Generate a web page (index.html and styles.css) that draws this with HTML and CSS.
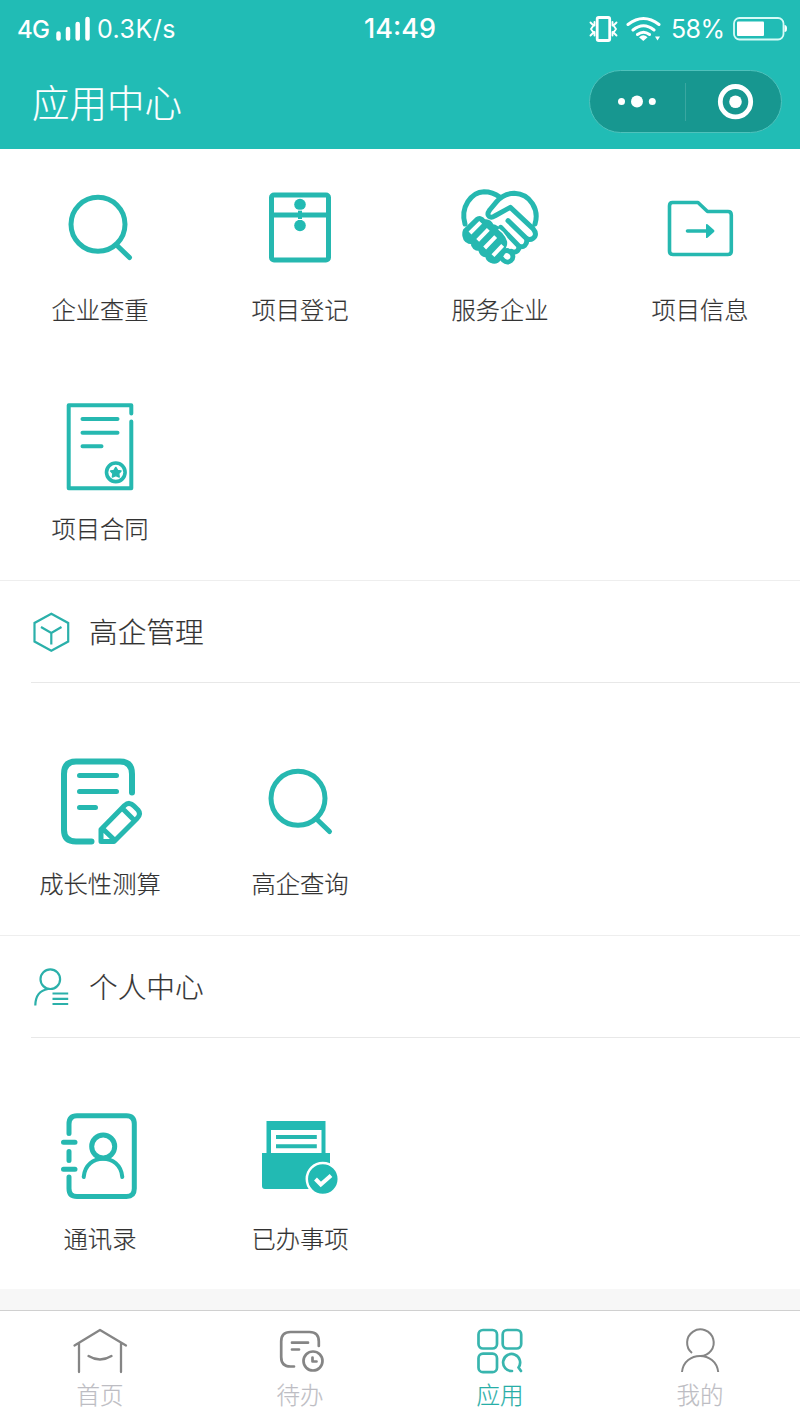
FILE: index.html
```html
<!DOCTYPE html>
<html lang="zh-CN">
<head>
<meta charset="utf-8">
<title>应用中心</title>
<link rel="stylesheet" href="styles.css">
</head>
<body>
<header class="top">
  <div class="status">
    <div class="status-left">
      <span class="net">4G</span>
      <svg class="signal" width="35" height="26" viewBox="56 14 35 26"><path d="M58.500 31.500v5M68 27v9.500M77.700 22v14.500M87.500 17v19.500"/></svg>
      <span class="speed">0.3K/s</span>
    </div>
    <span class="clock">14:49</span>
    <div class="status-right">
      <svg class="vibrate" width="30" height="30" viewBox="588 12 30 30"><rect x="597.200" y="15.500" width="12.500" height="23" rx="1.500"/><path class="wave" d="M590.500 20.500l3 3-2.500 3.500 2.500 3.500-3 3M594.500 20l0 3.500M594.500 30v3.500M616.500 20.500l-3 3 2.500 3.500-2.500 3.500 3 3M612.500 20v3.500M612.500 30v3.500"/></svg>
      <svg class="wifi" width="36" height="30" viewBox="626 12 36 30"><path class="wifi-arc" d="M628 22.500Q643.500 10.500 659 22.500M633 28Q643.500 19.500 654 28M637.500 32.500Q643.500 28 649.500 32.500"/><path class="wifi-dot" d="M639 35.200q4.300-4 8.600 0l-4.300 3.800zM655 34.500h5l-2.500 4z"/></svg>
      <span class="percent">58%</span>
      <svg class="battery" width="56" height="26" viewBox="732 14 56 26"><rect class="battery-case" x="734" y="16" width="49.500" height="21.500" rx="5.500"/><rect class="battery-fill" x="737" y="19.500" width="27" height="14.500" rx="1"/><path class="battery-fill" d="M784.500 23q2.500 0 2.500 3.500t-2.500 3.500z"/></svg>
    </div>
  </div>
  <div class="title-bar">
    <h1 class="title">应用中心</h1>
    <div class="capsule">
      <svg width="95" height="61" viewBox="590 71 95 61"><circle cx="621.500" cy="101.500" r="3.500"/><circle cx="637" cy="101.500" r="6"/><circle cx="652.300" cy="101.500" r="3.500"/></svg>
      <span class="divider"></span>
      <svg width="95" height="61" viewBox="686 71 95 61"><circle class="ring" cx="735.500" cy="101.700" r="15.200"/><circle cx="735.500" cy="101.700" r="6.300"/></svg>
    </div>
  </div>
</header>
<main>
  <section class="apps apps-first">
    <a class="app">
      <svg class="icon" viewBox="50 178 100 100"><circle cx="98" cy="224.300" r="27"/><path d="M116.500 245L129.500 257.500"/></svg>
      <span>企业查重</span>
    </a>
    <a class="app">
      <svg class="icon" viewBox="250 178 100 100"><rect x="271.500" y="195" width="57" height="65" rx="2.500"/><path d="M273 215h54"/><g class="solid"><circle cx="300" cy="204.500" r="5.800"/><circle cx="300" cy="225.500" r="5.800"/><path d="M298 210h4v11h-4z"/></g><path class="gap" d="M296.500 210.200h7M296.500 219.500h7"/></svg>
      <span>项目登记</span>
    </a>
    <a class="app">
      <svg class="icon" viewBox="450 178 100 100">
        <g class="hands" transform="translate(450 180) scale(.33333)">
          <path d="M45 132C30 82 64 36 102 35Q128 35 149 51"/>
          <path d="M255 132C268 90 242 42 193 40C169 40 152 51 140 65L119 90C106 109 122 116 134 108L181 82L249 146Q264 164 249 175Q240 181 230 176C233 195 220 204 207 199C207 214 196 220 184 214"/>
          <path d="M174 122L232 178M152 142L207 199"/>
          <path class="fist" d="M45 151L79 118Q91 108 103 124Q119 121 126 138Q143 140 148 157Q162 160 166 178Q168 192 161 205L150 234Q138 250 124 243Q111 239 112 225Q94 228 90 207Q70 208 67 187Q46 186 43 167Q42 158 45 151Z"/>
          <path class="slot" d="M92 127L60 159M115 148L83 181M137 170L104 204M158 196L129 227"/>
          <path class="crease" d="M147 148Q174 166 178 204"/>
          <path class="pinky" d="M160 216Q173 206 184 219Q194 231 183 242Q171 251 160 241L151 230Z"/>
        </g>
      </svg>
      <span>服务企业</span>
    </a>
    <a class="app">
      <svg class="icon" viewBox="650 178 100 100"><path class="mid" d="M672.500 202.500H698L707.500 211.500H728Q731.300 211.500 731.300 215V251Q731.300 254.500 728 254.500H673Q669.500 254.500 669.500 251V206Q669.500 202.500 672.500 202.500ZM687.500 231H707"/><path class="solid" d="M706 224.500Q706 223.500 707.500 224.200L714 230Q715 231 714 232L707.500 237.800Q706 238.500 706 237.500Z"/></svg>
      <span>项目信息</span>
    </a>
    <a class="app">
      <svg class="icon" viewBox="50 397 100 100"><path class="mid4" d="M131.300 413.500V405.300H68.700V488.300H131.300V421.500M82.500 419H117.500M82.500 432.800H117.500M82.500 446.300H101.500"/><circle class="mid" cx="115.800" cy="472.300" r="9.300"/><path class="star" d="M115.800 467.500L117.600 470.500L121 471L118.700 473.500L119.200 477L115.800 475.600L112.400 477L112.900 473.500L110.600 471L114 470.500Z"/></svg>
      <span>项目合同</span>
    </a>
  </section>

  <section class="group">
    <div class="group-head">
      <svg class="head-icon" width="40" height="44" viewBox="31 610 40 44"><path d="M51.300 613.700L68.200 623V641.500L51.300 650.800L34.500 641.500V623ZM41 627L51.300 633L61.500 627M51.300 633V644.500"/></svg>
      <h2>高企管理</h2>
    </div>
    <div class="apps">
      <a class="app">
        <svg class="icon" viewBox="50 752 100 100"><path class="bold" d="M132 792.500V774Q132 761.500 120 761.500H76Q64 761.500 64 774V830Q64 841.500 76 841.500H91.500"/><path d="M79.500 775.500H116.500M79.500 791.500H116.500M79.500 807.500H95.500"/><path d="M101 829.500L124.500 805.500Q129.500 801 134 806L138 810Q141.500 814 137 818.500L114 841.500H101ZM103 829L114.500 840M122.500 808.500L134 820"/></svg>
        <span>成长性测算</span>
      </a>
      <a class="app">
        <svg class="icon" viewBox="250 752 100 100"><circle cx="298" cy="798.300" r="27"/><path d="M316.500 819L329.500 831.500"/></svg>
        <span>高企查询</span>
      </a>
    </div>
  </section>

  <section class="group">
    <div class="group-head">
      <svg class="head-icon" width="40" height="44" viewBox="31 965 40 44"><circle cx="50.300" cy="979.200" r="9.800"/><path d="M35.300 1005.500Q35.500 991 48 989M52.500 993.500H68.200M52.500 998.800H68.200M52.500 1004H68.200"/></svg>
      <h2>个人中心</h2>
    </div>
    <div class="apps">
      <a class="app">
        <svg class="icon" viewBox="50 1107 100 100"><path d="M69 1133.500V1124Q69 1115.700 77 1115.700H126.500Q134.300 1115.700 134.300 1124V1188.500Q134.300 1196.500 126.500 1196.500H77Q69 1196.500 69 1188.500V1177M69 1151.500V1160.500M63.500 1142.200H75M63.500 1169.200H75"/><circle cx="103.200" cy="1146.500" r="11.500"/><path class="mid4" d="M83.700 1177C85.500 1152.500 120.500 1152.500 122.300 1177"/></svg>
        <span>通讯录</span>
      </a>
      <a class="app">
        <svg class="icon" viewBox="250 1107 100 100"><path class="solid" d="M266.500 1121H325.500V1153H330V1189H265Q262 1189 262 1186V1153H266.500Z"/><path class="paper" d="M271 1130H321.500V1153H271Z"/><path class="mid4 flat" d="M276 1137H316.800M276 1146.200H316.800"/><circle class="badge" cx="322.800" cy="1179" r="16"/><path class="check" d="M315.500 1179L320.800 1184.500L331 1175.500"/></svg>
        <span>已办事项</span>
      </a>
    </div>
  </section>
</main>
<nav class="tabs">
  <a class="tab">
    <svg viewBox="70 1325 60 50"><path d="M74.500 1345.500L100 1330L126 1345.500M79 1343.500V1372M121 1343.500V1372M88.500 1356Q100 1363 111.500 1356"/></svg>
    <span>首页</span>
  </a>
  <a class="tab">
    <svg viewBox="270 1325 60 50"><path class="heavy" d="M318.800 1346V1341.500Q318.800 1332 309.500 1332H290.500Q281.200 1332 281.200 1341.500V1357Q281.200 1366.500 290.500 1366.500H294M292 1342.700H308M292 1349.500H299"/><circle class="heavy" cx="313" cy="1361" r="9.500"/><path class="heavy" d="M312.500 1357.500V1361.500H316.500"/></svg>
    <span>待办</span>
  </a>
  <a class="tab active">
    <svg viewBox="470 1325 60 50"><rect x="478.500" y="1330" width="18.500" height="18.500" rx="4.500"/><rect x="502.700" y="1330" width="18.500" height="18.500" rx="4.500"/><rect x="478.500" y="1353.700" width="18.500" height="18.500" rx="4.500"/><path d="M512 1371A8.500 8.500 0 1 1 518.500 1367.500M518.500 1367.500L521 1371"/></svg>
    <span>应用</span>
  </a>
  <a class="tab">
    <svg viewBox="670 1325 60 50"><path class="thin" d="M692 1353A13.300 13.300 0 1 1 700 1356M682 1372C684 1350.500 716 1350.500 718.200 1372"/></svg>
    <span>我的</span>
  </a>
</nav>
</body>
</html>
```

FILE: styles.css
```css
* { box-sizing: border-box; }

body {
  margin: 0;
  width: 800px;
  height: 1422px;
  display: flex;
  flex-direction: column;
  background: #f7f7f7;
  color: #333;
  font-family: "Noto Sans CJK SC", sans-serif;
  font-weight: 300;
}

svg { display: block; flex: none; fill: none; stroke-linecap: round; stroke-linejoin: round; }
h1, h2 { margin: 0; font-weight: 300; }
h1, h2, .app span, .tab span { -webkit-text-stroke: 0.180px currentColor; }

.top { height: 149px; background: #21bcb5; color: #fff; }

.status {
  height: 54px;
  padding: 0 12px 0 17px;
  display: grid;
  grid-template-columns: 1fr auto 1fr;
  align-items: center;
  font-family: Inter, sans-serif;
  font-weight: 400;
  font-size: 25px;
  line-height: 54px;
}
.status-left, .status-right { display: flex; align-items: center; }
.status-right { justify-content: flex-end; }
.net { width: 39px; font-size: 24px; font-weight: 500; letter-spacing: -0.800px; padding-top: 3px; }
.signal { stroke: #fff; stroke-width: 4.5; }
.speed { margin-left: 6px; letter-spacing: 0.450px; }
.clock { font-size: 27px; font-weight: 500; margin-right: 5px; }
.vibrate { stroke: #fff; stroke-width: 2.8; margin-right: 8px; }
.vibrate .wave { stroke-width: 1.900; }
.wifi { margin-right: 9px; }
.wifi-arc { stroke: #fff; stroke-width: 3; }
.wifi-dot { fill: #fff; }
.percent { width: 54px; margin-right: 7px; white-space: nowrap; letter-spacing: -0.600px; }
.battery-case { stroke: #d7fbf7; stroke-width: 1.8; }
.battery-fill { fill: #fff; }

.title-bar {
  height: 95px;
  padding: 0 18px 0 32px;
  display: flex;
  align-items: center;
  justify-content: space-between;
}
.title { font-size: 37.500px; line-height: 50px; padding-bottom: 2px; }
.capsule {
  width: 193px;
  height: 63px;
  border: 1.500px solid #4fc2bc;
  border-radius: 32px;
  background: #179790;
  display: flex;
  align-items: center;
}
.capsule svg { fill: #fff; }
.capsule .ring { fill: none; stroke: #fff; stroke-width: 4.800; }
.divider { width: 1px; height: 38px; background: #3aa7a1; }

main { background: #fff; height: 1140px; flex: none; }

.apps {
  display: grid;
  grid-template-columns: repeat(4, 200px);
  row-gap: 71px;
  padding: 69px 0 35px;
}
.apps-first { padding-top: 29px; }
.app { display: flex; flex-direction: column; align-items: center; gap: 14px; }
.app span { font-size: 24.300px; line-height: 34px; white-space: nowrap; }

.icon { width: 100px; height: 100px; stroke: #26b8b0; stroke-width: 5; }
.icon .solid { fill: #22bab3; stroke: none; }
.icon .mid { stroke-width: 3.6; }
.icon .mid4 { stroke-width: 4; }
.icon .flat { stroke-linecap: butt; }
.icon .bold { stroke-width: 6; }
.icon .gap { stroke: #fff; stroke-width: 1; stroke-linecap: butt; }
.icon .hands { stroke-width: 15; }
.icon .fist { fill: #26b8b0; stroke-width: 12; }
.icon .slot { stroke: #fff; stroke-width: 12; stroke-linecap: butt; }
.icon .crease { stroke: #fff; stroke-width: 4; }
.icon .pinky { fill: #fff; stroke-width: 14; }
.icon .star { fill: #26b8b0; stroke-width: 1.5; }
.icon .paper { fill: #fff; stroke: none; }
.icon .badge { fill: #22bab3; stroke: #fff; stroke-width: 2.5; }
.icon .check { stroke: #fff; stroke-width: 4; stroke-linecap: butt; stroke-linejoin: miter; }

.group { border-top: 1px solid #eee; }
.group-head {
  height: 102px;
  margin-left: 31px;
  border-bottom: 1px solid #e8e8e8;
  display: flex;
  align-items: center;
  gap: 18px;
}
.group-head h2 { font-size: 28.700px; line-height: 40px; padding-bottom: 1px; }
.head-icon { stroke: #2bb0aa; stroke-width: 2.2; stroke-linecap: butt; stroke-linejoin: miter; }

.tabs {
  margin-top: auto;
  height: 112px;
  flex: none;
  border-top: 1px solid #d0d0d0;
  background: #fff;
  display: grid;
  grid-template-columns: repeat(4, 200px);
  color: #bdbdc3;
}
.tab { display: flex; flex-direction: column; align-items: center; padding-top: 14px; gap: 3px; }
.tab svg { width: 60px; height: 50px; stroke: #858585; stroke-width: 2.300; }
.tab .heavy { stroke-width: 2.700; }
.tab .thin { stroke-width: 2; stroke-linecap: butt; }
.tab span { font-size: 23.500px; line-height: 32px; }
.tab.active { color: #27aea7; }
.tab.active svg { stroke: #38b5ae; stroke-width: 2.700; }
```
